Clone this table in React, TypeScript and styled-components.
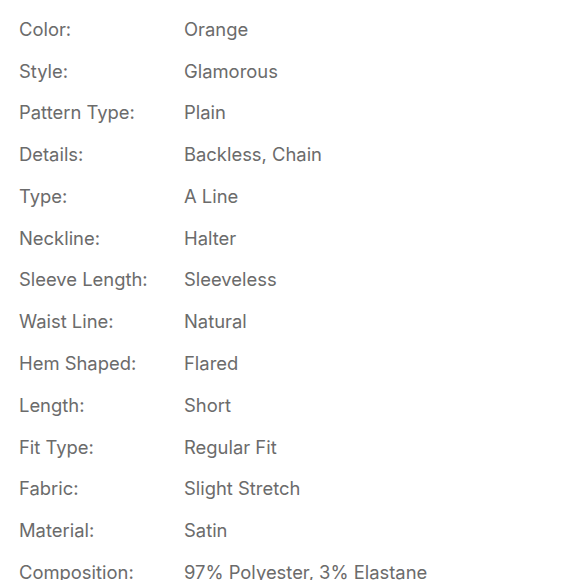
import React from 'react';
import styled, { createGlobalStyle } from 'styled-components';

const specs: [string, string][] = [
    ['Color:', 'Orange'],
    ['Style:', 'Glamorous'],
    ['Pattern Type:', 'Plain'],
    ['Details:', 'Backless, Chain'],
    ['Type:', 'A Line'],
    ['Neckline:', 'Halter'],
    ['Sleeve Length:', 'Sleeveless'],
    ['Waist Line:', 'Natural'],
    ['Hem Shaped:', 'Flared'],
    ['Length:', 'Short'],
    ['Fit Type:', 'Regular Fit'],
    ['Fabric:', 'Slight Stretch'],
    ['Material:', 'Satin'],
    ['Composition:', '97% Polyester, 3% Elastane'],
];

function App() {
    return (
        <>
            <GlobalStyle />
            <SpecList>
                {specs.map(([label, value]) => (
                    <SpecRow key={label}>
                        <Label>{label}</Label>
                        <Value>{value}</Value>
                    </SpecRow>
                ))}
            </SpecList>
        </>
    );
}

export default App;

const colors = {
    text: "#6b6b6b",
    background: "#ffffff"
};

const GlobalStyle = createGlobalStyle`
    body {
        margin: 0;
        background: ${colors.background};
        font-family: Inter, "Noto Sans", sans-serif;
        overflow: hidden;
    }
`;

const SpecList = styled.dl`
    margin: 0;
    padding: 8px 18px 0 19px;
    display: flex;
    flex-direction: column;
`;

const SpecRow = styled.div`
    display: grid;
    grid-template-columns: 165px 1fr;
    align-items: center;
    height: 41.77px;
    font-size: 18.4px;
    color: ${colors.text};
`;

const Label = styled.dt`
    margin: 0;
`;

const Value = styled.dd`
    margin: 0;
`;
